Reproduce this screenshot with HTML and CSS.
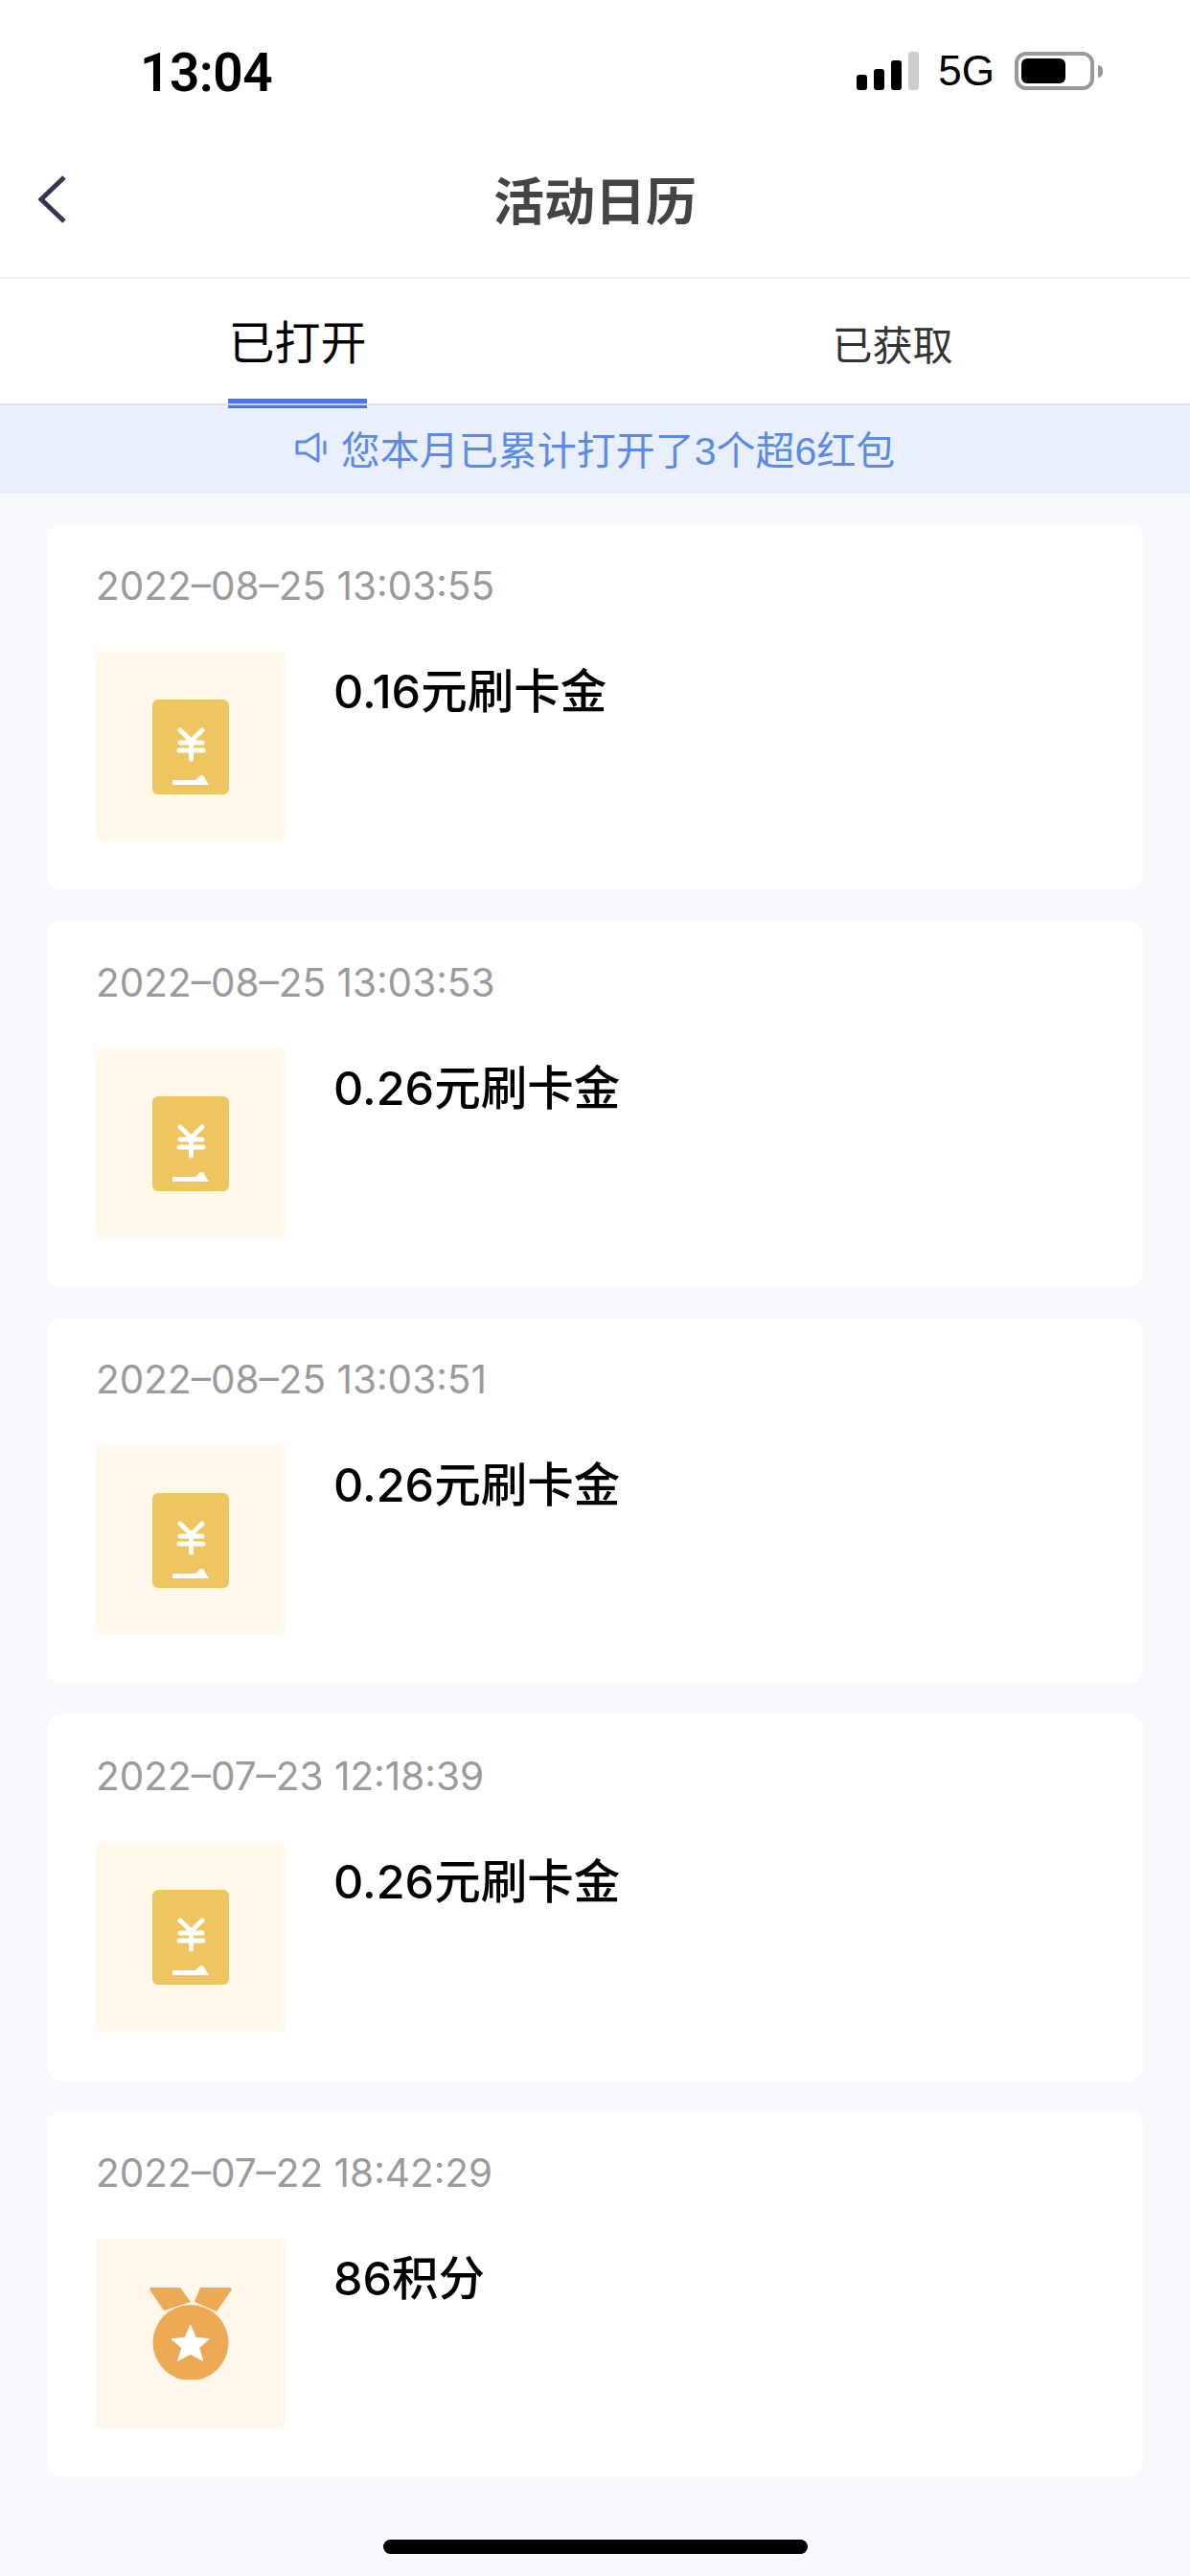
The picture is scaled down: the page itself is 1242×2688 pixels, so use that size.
FILE: index.html
```html
<!DOCTYPE html>
<html lang="zh-CN">
<head>
    <meta charset="UTF-8">
    <meta name="viewport" content="width=device-width, initial-scale=1.0">
    <title>活动日历</title>
    <link rel="stylesheet" href="styles.css">
</head>
<body>
    <svg class="icon-defs" width="0" height="0">
        <symbol id="icon-coupon" viewBox="0 0 80 99">
            <rect width="80" height="99" rx="6" fill="#efc55f"/>
            <path d="M29 32L40.500 43L52 32M29 45H52M28 53H53M40.500 43V62" fill="none" stroke="#fff" stroke-width="5" stroke-linecap="round" stroke-linejoin="round"/>
            <path d="M21 84H45L50 79H53L59 89H21Z" fill="#fff"/>
        </symbol>
        <symbol id="icon-medal" viewBox="0 0 88 96">
            <path d="M2 0H33L44 15L16 24L1 2Z" fill="#eea955"/>
            <path d="M54 0H85L87 2L71 25L48 15Z" fill="#eea955"/>
            <circle cx="44" cy="57.500" r="39.500" fill="#eea955"/>
            <path d="M43.700 39L49.300 52.300L63.300 53.700L52.700 62.900L56.700 76.300L43.700 69.500L30.700 76.300L34.700 62.900L24 53.700L38.100 52.300Z" fill="#fff" stroke="#fff" stroke-width="1" stroke-linejoin="round"/>
        </symbol>
    </svg>

    <div class="status-bar">
        <span class="status-time">13:04</span>
        <div class="status-right">
            <div class="signal">
                <span class="signal-bar bar-1"></span>
                <span class="signal-bar bar-2"></span>
                <span class="signal-bar bar-3"></span>
                <span class="signal-bar bar-4"></span>
            </div>
            <span class="status-net">5G</span>
            <div class="battery">
                <div class="battery-body"><div class="battery-level"></div></div>
                <div class="battery-nub"></div>
            </div>
        </div>
    </div>

    <header class="nav">
        <svg class="nav-back" width="32" height="50" viewBox="0 0 32 50">
            <path d="M29 2L5 25L29 48" fill="none" stroke="#2f3a4f" stroke-width="5"/>
        </svg>
        <h1 class="nav-title">活动日历</h1>
    </header>

    <div class="tabs">
        <div class="tab tab-active">
            <span class="tab-label">已打开<span class="tab-line"></span></span>
        </div>
        <div class="tab">
            <span class="tab-label">已获取</span>
        </div>
    </div>

    <div class="notice">
        <svg class="notice-icon" width="34" height="32" viewBox="0 0 34 32">
            <path d="M2 10H11L24 2V30L11 22H2Z" fill="none" stroke="#5b8ae8" stroke-width="3" stroke-linejoin="round"/>
            <path d="M31 10V22" fill="none" stroke="#5b8ae8" stroke-width="3" stroke-linecap="round"/>
        </svg>
        <span>您本月已累计打开了3个超6红包</span>
    </div>

    <main class="list">
        <section class="card">
            <div class="card-date">2022–08–25 13:03:55</div>
            <div class="card-body">
                <div class="thumb thumb-coupon"><svg width="80" height="99"><use href="#icon-coupon"/></svg></div>
                <div class="card-title">0.16元刷卡金</div>
            </div>
        </section>
        <section class="card">
            <div class="card-date">2022–08–25 13:03:53</div>
            <div class="card-body">
                <div class="thumb thumb-coupon"><svg width="80" height="99"><use href="#icon-coupon"/></svg></div>
                <div class="card-title">0.26元刷卡金</div>
            </div>
        </section>
        <section class="card">
            <div class="card-date">2022–08–25 13:03:51</div>
            <div class="card-body">
                <div class="thumb thumb-coupon"><svg width="80" height="99"><use href="#icon-coupon"/></svg></div>
                <div class="card-title">0.26元刷卡金</div>
            </div>
        </section>
        <section class="card">
            <div class="card-date">2022–07–23 12:18:39</div>
            <div class="card-body">
                <div class="thumb thumb-coupon"><svg width="80" height="99"><use href="#icon-coupon"/></svg></div>
                <div class="card-title">0.26元刷卡金</div>
            </div>
        </section>
        <section class="card">
            <div class="card-date">2022–07–22 18:42:29</div>
            <div class="card-body">
                <div class="thumb thumb-medal"><svg width="88" height="96"><use href="#icon-medal"/></svg></div>
                <div class="card-title">86积分</div>
            </div>
        </section>
    </main>

    <div class="home-bar"></div>
</body>
</html>
```
FILE: styles.css
```css
* {
    box-sizing: border-box;
}

html, body {
    height: 2688px;
}

body {
    margin: 0;
    overflow: hidden;
    position: relative;
    font-family: "Inter", "Noto Sans CJK SC", sans-serif;
    background-color: #f8f9fd;
    color: #000;
}

.icon-defs {
    position: absolute;
}

/* status bar */
.status-bar {
    display: flex;
    justify-content: space-between;
    align-items: center;
    height: 128px;
    padding: 20px 91px 0 146px;
    background-color: #fff;
}

.status-time {
    margin-top: 3px;
    font-family: "Roboto", sans-serif;
    font-size: 55px;
    font-weight: 600;
    letter-spacing: -0.5px;
}

.status-right {
    display: flex;
    align-items: center;
}

.signal {
    display: flex;
    align-items: flex-end;
    gap: 7px;
    height: 40px;
}

.signal-bar {
    width: 11px;
    border-radius: 3px;
    background-color: #000;
}

.bar-1 { height: 16px; }
.bar-2 { height: 22px; }
.bar-3 { height: 31px; }
.bar-4 { height: 40px; background-color: #ccc; }

.status-net {
    margin-left: 20px;
    font-family: "Liberation Sans", sans-serif;
    font-size: 44px;
    line-height: 40px;
}

.battery {
    display: flex;
    align-items: center;
    margin-left: 21px;
}

.battery-body {
    width: 83px;
    height: 40px;
    padding: 3px;
    border: 4px solid #999;
    border-radius: 12px;
}

.battery-level {
    width: 46px;
    height: 100%;
    border-radius: 6px;
    background-color: #000;
}

.battery-nub {
    width: 5px;
    height: 13px;
    margin-left: 4px;
    border-radius: 0 6px 6px 0;
    background-color: #999;
}

/* nav */
.nav {
    display: flex;
    align-items: center;
    justify-content: center;
    position: relative;
    height: 163px;
    padding-bottom: 3px;
    border-bottom: 2px solid #f2f2f2;
    background-color: #fff;
}

.nav-back {
    position: absolute;
    left: 38px;
    top: 55px;
}

.nav-title {
    margin: 0;
    font-size: 53px;
    font-weight: 700;
    color: #444;
}

/* tabs */
.tabs {
    display: flex;
    height: 132px;
    border-bottom: 2px solid #e2e2e2;
    background-color: #fff;
}

.tab {
    flex: 1;
    display: flex;
    justify-content: center;
    padding-top: 35px;
    font-size: 42px;
    color: #333;
}

.tab-active {
    padding-top: 32px;
    font-size: 48px;
    color: #000;
}

.tab-label {
    position: relative;
    height: 100%;
    line-height: 70px;
}

.tab-line {
    position: absolute;
    left: 0;
    right: 0;
    bottom: -5px;
    height: 10px;
    background: linear-gradient(#4a77e0 0 50%, #c4d3f4 50% 70%, #4a77e0 70%);
}

/* notice */
.notice {
    display: flex;
    align-items: center;
    justify-content: center;
    gap: 14px;
    height: 92px;
    padding-bottom: 4px;
    background-color: #e9f0fc;
    font-family: "Liberation Sans", "Noto Sans CJK SC", sans-serif;
    font-size: 41px;
    color: #5b8ae8;
}

/* cards */
.list {
    display: flex;
    flex-direction: column;
    gap: 34px;
    padding: 33px 49px 0;
}

.card {
    height: 380px;
    padding: 34px 51px 50px;
    border-radius: 14px;
    background-color: #fff;
}

.card-date {
    margin-bottom: 38px;
    font-size: 40.500px;
    font-weight: 400;
    line-height: 60px;
    color: #9b9b9b;
}

.card-body {
    display: flex;
    align-items: flex-start;
    gap: 50px;
}

.thumb {
    display: flex;
    align-items: center;
    justify-content: center;
    flex-shrink: 0;
    width: 198px;
    height: 198px;
    border-radius: 6px;
}

.thumb-coupon {
    background-color: #fff9ec;
}

.thumb-medal {
    background-color: #fff6ec;
}

.card-title {
    font-size: 48.500px;
    font-weight: 500;
    line-height: 84px;
}

.home-bar {
    position: absolute;
    left: 400px;
    top: 2650px;
    width: 443px;
    height: 15px;
    border-radius: 8px;
    background-color: #000;
}
```
